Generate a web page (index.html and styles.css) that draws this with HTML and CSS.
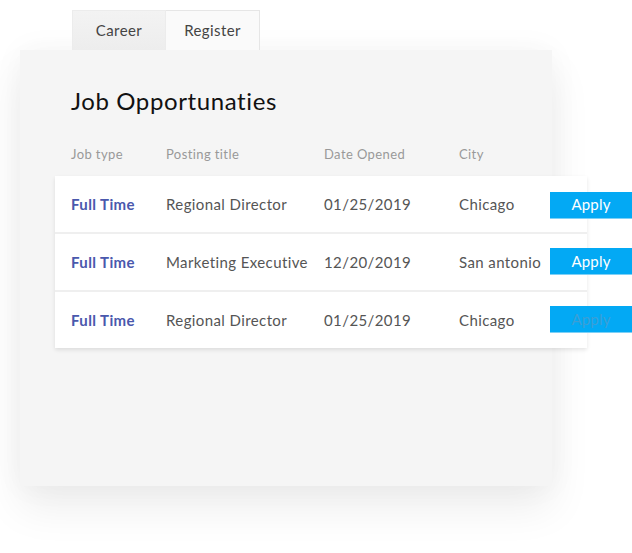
FILE: index.html
```html
<!DOCTYPE html>
<html>
<head>
<meta charset="utf-8">
<link rel="stylesheet" href="styles.css">
</head>
<body>
<div class="tabs">
  <div class="tab tab-career">Career</div>
  <div class="tab tab-register">Register</div>
</div>
<div class="panel">
  <h1 class="title">Job Opportunaties</h1>
  <div class="head-row">
    <span class="c1">Job type</span>
    <span class="c2">Posting title</span>
    <span class="c3">Date Opened</span>
    <span class="c4">City</span>
  </div>
  <div class="card">
    <div class="row">
      <span class="c1 type">Full Time</span>
      <span class="c2">Regional Director</span>
      <span class="c3">01/25/2019</span>
      <span class="c4">Chicago</span>
      <span class="apply first">Apply</span>
    </div>
    <div class="row">
      <span class="c1 type">Full Time</span>
      <span class="c2">Marketing Executive</span>
      <span class="c3">12/20/2019</span>
      <span class="c4">San antonio</span>
      <span class="apply">Apply</span>
    </div>
    <div class="row">
      <span class="c1 type">Full Time</span>
      <span class="c2">Regional Director</span>
      <span class="c3">01/25/2019</span>
      <span class="c4">Chicago</span>
      <span class="apply faded">Apply</span>
    </div>
  </div>
</div>
</body>
</html>
```

FILE: styles.css
```css
html, body {
  margin: 0;
  padding: 0;
  background: #ffffff;
  overflow: hidden;
}
body {
  width: 632px;
  height: 553px;
  font-family: "Lato", "Open Sans", sans-serif;
  color: #555;
  letter-spacing: 0.4px;
}
.tabs {
  display: flex;
  margin-left: 72px;
  padding-top: 10px;
  height: 40px;
}
.tab {
  display: flex;
  align-items: center;
  justify-content: center;
  font-size: 15px;
  color: #444;
  box-sizing: border-box;
  height: 40px;
  padding-bottom: 1px;
}
.tab-career {
  width: 94px;
  background: linear-gradient(#f3f3f3, #ededed);
  border: 1px solid #ececec;
  border-bottom: none;
}
.tab-register {
  width: 94px;
  background: #fafafa;
  border: 1px solid #e6e6e6;
  border-left: none;
  border-bottom: none;
}
.panel {
  margin-left: 20px;
  width: 532px;
  height: 436px;
  background: #f5f5f5;
  box-shadow: 0 22px 40px rgba(0,0,0,0.07), 0 0 30px rgba(0,0,0,0.04);
  padding-top: 37px;
  box-sizing: border-box;
}
.title {
  margin: 0 0 0 51px;
  font-weight: 400;
  font-size: 24px;
  line-height: 28px;
  letter-spacing: 0.6px;
  color: #111;
}
.head-row {
  display: flex;
  margin-top: 31px;
  margin-left: 51px;
  font-size: 13px;
  color: #999;
  height: 16px;
  line-height: 16px;
}
.c1 { width: 95px; flex: none; }
.c2 { width: 158px; flex: none; }
.c3 { width: 135px; flex: none; }
.c4 { width: 91px; flex: none; }
.card {
  margin-left: 35px;
  margin-top: 14px;
  width: 532px;
  background: #fff;
  box-shadow: 0 2px 4px rgba(0,0,0,0.1);
}
.row {
  display: flex;
  align-items: center;
  height: 55px;
  padding-left: 16px;
  padding-bottom: 1px;
  font-size: 15px;
  color: #555;
  border-top: 2px solid #efefef;
}
.row:first-child {
  border-top: none;
}
.type {
  color: #4a58ad;
  font-weight: 700;
}
.apply {
  flex: none;
  width: 82px;
  height: 27px;
  box-sizing: border-box;
  background: #03a9f4;
  border-bottom: 1px solid #7dd0f6;
  color: #fff;
  font-size: 15px;
  letter-spacing: 0.2px;
  display: flex;
  align-items: center;
  justify-content: center;
  padding-bottom: 1px;
}
.apply.first {
  margin-top: 3px;
}
.apply.faded {
  color: #3a9fd6;
}
```
